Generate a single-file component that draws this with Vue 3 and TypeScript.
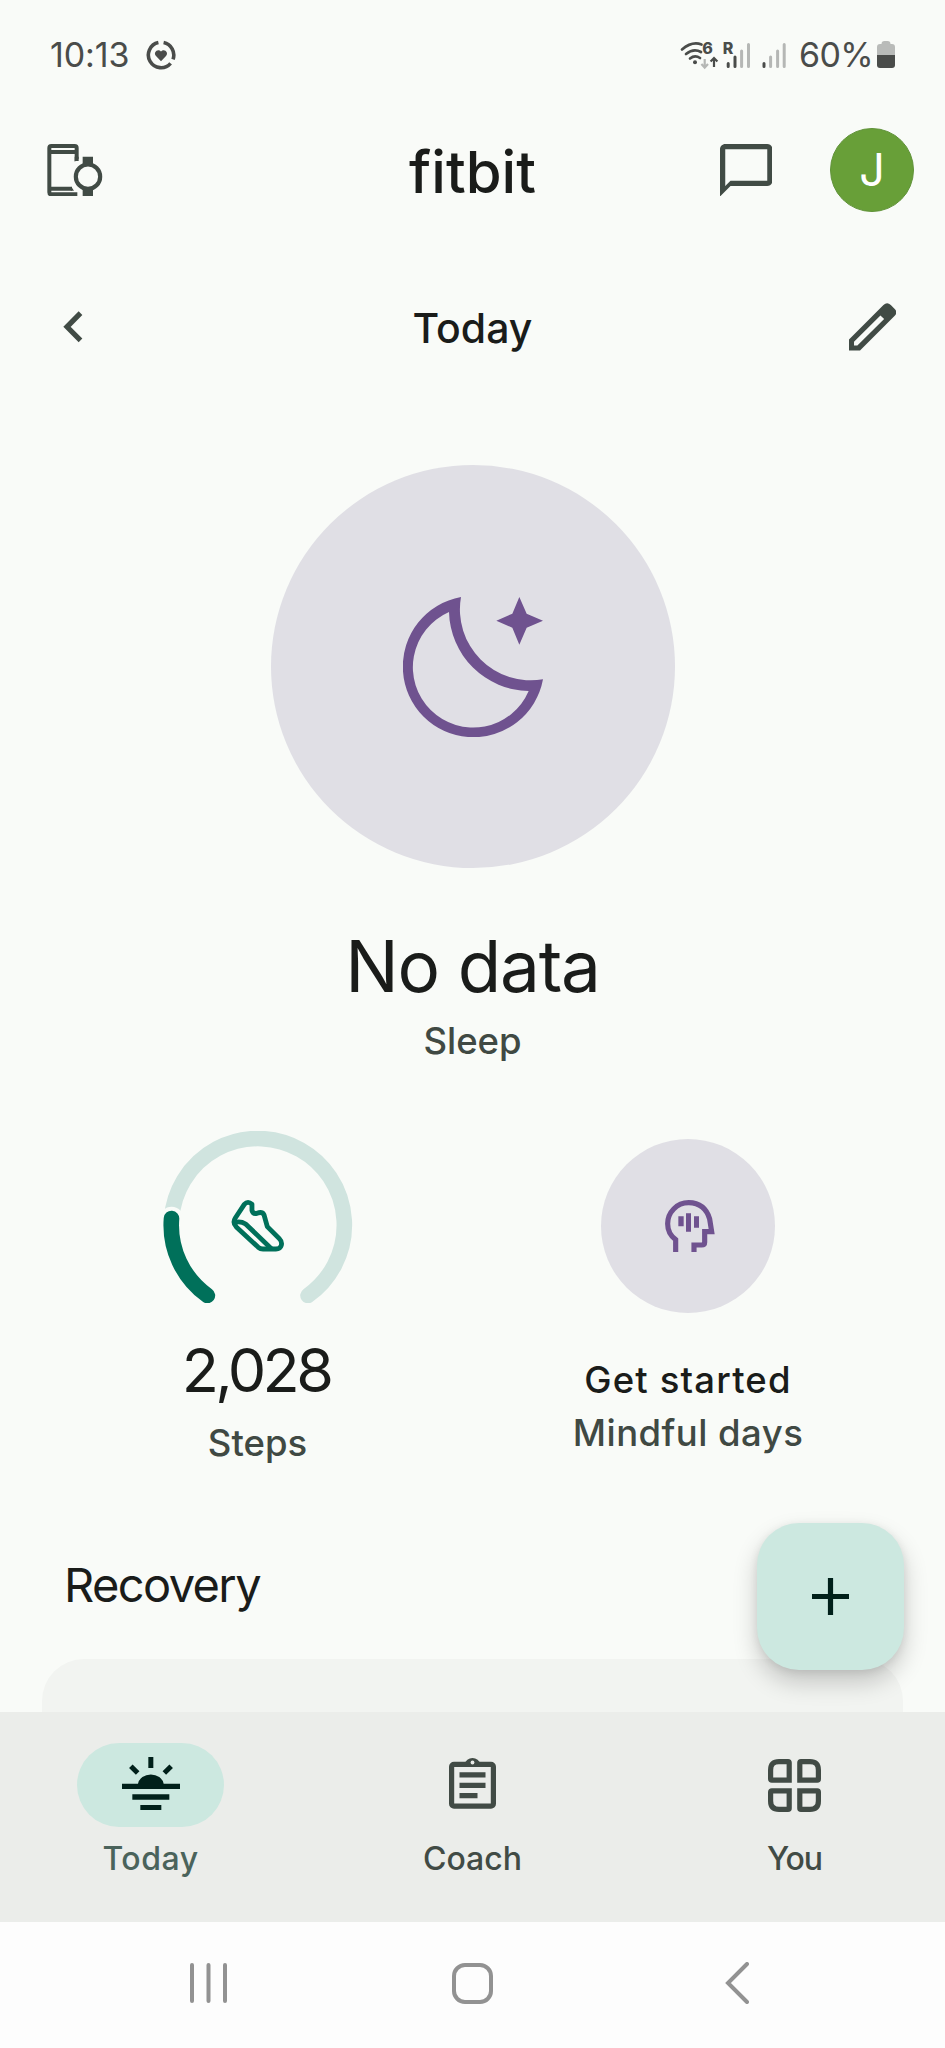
<script setup lang="ts">
interface Tab {
  id: 'today' | 'coach' | 'you'
  label: string
}

const tabs: Tab[] = [
  { id: 'today', label: 'Today' },
  { id: 'coach', label: 'Coach' },
  { id: 'you', label: 'You' },
]
const activeTab: Tab['id'] = 'today'
</script>

<template>
  <div class="screen">
    <main class="content">
      <div class="status">
        <div class="status-left">
          <span class="clock">10:13</span>
          <svg class="ring" viewBox="0 0 30 30">
            <g fill="none" stroke="#4a4c4a" stroke-width="3.6">
              <path d="M12.4 2.6A12.7 12.7 0 1 0 24.6 23.4" />
              <path d="M17.6 2.6A12.7 12.7 0 0 1 27 19.4" />
            </g>
            <path fill="#4a4c4a" d="M15 21.2l-5-5.1c-3.200-3.600 1.800-8.200 5-4.500 3.200-3.700 8.200.900 5 4.500z" />
          </svg>
        </div>
        <div class="status-right">
          <svg class="signals" viewBox="0 -8 108 46">
            <g fill="none" stroke="#4a4c4a" stroke-width="2.700" stroke-linecap="round">
              <path d="M2 9.500Q12 1 21.500 4.500" />
              <path d="M6 14Q13.500 8 21 12" />
              <path d="M10 18.500Q15 14.500 20 18" />
            </g>
            <circle cx="15" cy="22.300" r="2" fill="#4a4c4a" />
            <text x="22.300" y="13.800" class="tiny">6</text>
            <path fill="none" stroke="#b5b7b5" stroke-width="2.200" d="M24.700 19v8M21.400 24l3.300 3.600 3.300-3.600" />
            <path fill="none" stroke="#4a4c4a" stroke-width="2.200" d="M34 27v-8M30.600 21.600l3.400-3.600 3.400 3.600" />
            <text x="42.800" y="13.800" class="tiny">R</text>
            <g stroke-width="3" stroke-linecap="round">
              <path stroke="#4a4c4a" d="M48.200 23.500v3M55 17v9.500M84 23.500v3" />
              <path stroke="#b5b7b5" d="M61.600 11v15.500M68.500 4.500v22M90.600 17v9.500M97.600 11v15.500M104.200 4.500v22" />
            </g>
          </svg>
          <span class="percent">60%</span>
          <svg class="battery" viewBox="0 0 18 28">
            <path fill="#b9bbb9" d="M4.500 3q0-3 3-3h3q3 0 3 3h1.500q3 0 3 3v9H0V6q0-3 3-3z" />
            <path fill="#4a4c4a" d="M0 14h18v10q0 3-3 3H3q-3 0-3-3z" />
          </svg>
        </div>
      </div>

      <header class="appbar">
        <svg class="devices" viewBox="141 373 168 158">
          <g fill="none" stroke="#414b45" stroke-width="12">
            <path d="M230 424V385q0-6-6-6H154q-6 0-6 6V518q0 6 6 6H232" />
            <path d="M148 397H230M148 507H216" />
            <circle cx="264" cy="471" r="36.500" stroke-width="12.500" />
          </g>
          <path fill="#414b45" d="M248 411h31v25h-31zM248 506h31v25h-31zM224 411h12v6l-12 9zM214 501l8 12h-10z" />
        </svg>
        <h1 class="brand">fitbit</h1>
        <div class="appbar-end">
          <svg class="chat" viewBox="2 2 20 20">
            <path fill="#414b45" fill-rule="evenodd" d="M20 2H4c-1.100 0-2 .9-2 2v18l4-4h14c1.100 0 2-.9 2-2V4c0-1.100-.9-2-2-2zm0 14H6l-2 2V4h16z" />
          </svg>
          <div class="avatar">J</div>
        </div>
      </header>

      <div class="daybar">
        <svg class="prev" viewBox="0 0 20 32">
          <path fill="none" stroke="#414b45" stroke-width="5.200" d="M17.500 2.200L4 15.800l13.500 13.600" />
        </svg>
        <h2 class="day">Today</h2>
        <svg class="edit" viewBox="24 28 142 142">
          <path
            fill="#414b45"
            fill-rule="evenodd"
            d="M24 170V137L127 34Q138 23 149 34L160 45Q171 56 160 67L57 170ZM39 155H49L129 76L118 65L39 144Z"
          />
        </svg>
      </div>

      <section class="hero">
        <div class="hero-circle">
          <svg class="moon" viewBox="427 440 420 420">
            <path
              fill="#6f528f"
              fill-rule="evenodd"
              d="M601 440A212 212 0 1 0 847 687A213 213 0 0 1 601 440ZM565 485A181 181 0 1 0 804 722A243 243 0 0 1 565 485Z"
            />
            <path fill="#6f528f" d="M776 440l22 50 49 21-49 21-22 51-21-51-48-21 48-21z" />
          </svg>
        </div>
        <div class="hero-value">No data</div>
        <div class="hero-label">Sleep</div>
      </section>

      <section class="stats">
        <div class="stat">
          <svg class="gauge" viewBox="0 0 190 172">
            <g fill="none" stroke-linecap="round" stroke-width="15.600">
              <path stroke="#d0e4df" d="M8.600 87.500A86.500 86.500 0 1 1 145 164.500" />
              <path stroke="#f9fbf8" stroke-width="24" d="M8.600 87.700L8.500 99" />
              <path stroke="#00705a" d="M8.500 87.500A86.500 86.500 0 0 0 44.400 164.500" />
            </g>
            <g transform="translate(-22.700 -21.700) scale(.33333)" fill="none" stroke="#00705a" stroke-width="14.500" stroke-linejoin="round">
              <path d="M285 326L312 285Q323 273 335 285V303Q338 315 350 312Q365 306 371 316L381 352L417 388Q426 397 423 408Q420 419 407 419H368Q360 419 354 414L288 353Q276 340 285 326Z" />
              <path d="M281 340Q300 334 316 344L394 419" />
            </g>
          </svg>
          <div class="stat-number">2,028</div>
          <div class="stat-label steps">Steps</div>
        </div>
        <div class="stat">
          <div class="mind-circle">
            <svg class="head" viewBox="342 239 150 158">
              <path
                fill="none"
                stroke="#6f528f"
                stroke-width="15.500"
                d="M374 397V358Q350 340 350 311A63 63 0 0 1 413 247Q462 248 476 296L482 334H461V366Q461 374 452 374H429V397"
              />
              <path fill="#6f528f" d="M382 288h16v30h-16zM405 279h15v55h-15zM429 288h15v34h-15z" />
            </svg>
          </div>
          <div class="stat-title">Get started</div>
          <div class="stat-label mindful">Mindful days</div>
        </div>
      </section>

      <section class="recovery">
        <h3 class="recovery-title">Recovery</h3>
        <div class="card"></div>
      </section>

      <button class="fab" aria-label="Add">
        <svg viewBox="0 0 37 37"><path stroke="#00201a" stroke-width="5.200" d="M18.500 0v37M0 18.500h37" /></svg>
      </button>
    </main>

    <nav class="tabs">
      <div v-for="tab in tabs" :key="tab.id" class="tab" :class="[tab.id, { active: tab.id === activeTab }]">
        <div class="pill">
          <svg v-if="tab.id === 'today'" class="sun" viewBox="365 168 174 159">
            <path
              fill="#00201a"
              d="M365 248h48a39 33 0 0 1 77 0h49v16H365zM396 280h111v16H396zM420 312h63v15h-63zM444 168h15v33h-15z"
            />
            <path stroke="#00201a" stroke-width="15" d="M391.500 195.500l20.500 20.500M512.500 195.500L492 216" />
          </svg>
          <svg v-else-if="tab.id === 'coach'" class="clip" viewBox="0 0 47 53">
            <g fill="none" stroke="#414b45" stroke-width="5.200">
              <rect x="2.600" y="8.400" width="41.800" height="41.800" rx="2.400" />
              <path d="M10.500 18.800h26M10.500 29.300h26M10.500 39.700h18" />
            </g>
            <path fill="#414b45" d="M15.500 8.400a8.200 8.200 0 0 1 16 0z" />
            <circle cx="23.500" cy="6.500" r="1.900" fill="#ebedea" />
          </svg>
          <svg v-else class="grid" viewBox="0 0 53 53">
            <g fill="none" stroke="#414b45" stroke-width="5.200">
              <path d="M11 2.600H20Q21.200 2.600 21.200 3.800V21.200H3.800Q2.600 21.200 2.600 20V11Q2.600 2.600 11 2.600Z" />
              <path d="M42 2.600H33Q31.800 2.600 31.800 3.800V21.200H49.200Q50.400 21.200 50.400 20V11Q50.400 2.600 42 2.600Z" />
              <path d="M11 50.400H20Q21.200 50.400 21.200 49.200V31.800H3.800Q2.600 31.800 2.600 33V42Q2.600 50.400 11 50.400Z" />
              <path d="M42 50.400H33Q31.800 50.400 31.800 49.200V31.800H49.200Q50.400 31.800 50.400 33V42Q50.400 50.400 42 50.400Z" />
            </g>
          </svg>
        </div>
        <span class="tab-label">{{ tab.label }}</span>
      </div>
    </nav>

    <div class="system">
      <svg class="recents" viewBox="0 0 37 40">
        <path stroke="#929292" stroke-width="4" stroke-linecap="round" d="M2 2v36M18.500 2v36M35 2v36" />
      </svg>
      <svg class="home" viewBox="0 0 41 41">
        <rect x="2" y="2" width="37" height="37" rx="11" fill="none" stroke="#929292" stroke-width="4" />
      </svg>
      <svg class="back" viewBox="0 0 24 42">
        <path fill="none" stroke="#929292" stroke-width="4" stroke-linecap="round" d="M22 2L3 21l19 19" />
      </svg>
    </div>
  </div>
</template>

<style>
html,
body {
  margin: 0;
  background: #f9fbf8;
}
</style>

<style scoped>
.screen {
  width: 945px;
  height: 2048px;
  display: flex;
  flex-direction: column;
  overflow: hidden;
  background: #f9fbf8;
  color: #1a1c1a;
  font-family: Inter, Roboto, sans-serif;
}
svg {
  display: block;
  flex: none;
}
h1,
h2,
h3 {
  margin: 0;
}
.content {
  position: relative;
  height: 1712px;
  flex: none;
  overflow: hidden;
}

.status {
  height: 110px;
  box-sizing: border-box;
  padding: 0 50px;
  display: flex;
  align-items: center;
  justify-content: space-between;
  color: #4a4c4a;
}
.status-left,
.status-right {
  display: flex;
  align-items: center;
}
.clock,
.percent {
  font-size: 34px;
  line-height: 40px;
  white-space: nowrap;
}
.clock {
  width: 96px;
  letter-spacing: -0.1px;
}
.percent {
  width: 78px;
  letter-spacing: -0.6px;
}
.ring {
  width: 30px;
  height: 30px;
}
.signals {
  width: 108px;
  height: 46px;
  margin-right: 11px;
}
.battery {
  width: 18px;
  height: 28px;
}
.tiny {
  font-size: 16px;
  font-weight: 800;
  fill: #4a4c4a;
}

.appbar {
  height: 120px;
  box-sizing: border-box;
  padding: 0 31px;
  display: grid;
  grid-template-columns: 1fr auto 1fr;
  align-items: center;
}
.devices {
  width: 56px;
  height: 52.7px;
  margin-left: 16px;
}
.brand {
  padding-top: 3px;
  font-size: 58px;
  line-height: 70px;
  font-weight: 500;
}
.appbar-end {
  display: flex;
  align-items: center;
  justify-content: flex-end;
  gap: 58px;
}
.chat {
  width: 52.5px;
  height: 52.5px;
}
.avatar {
  width: 84px;
  height: 84px;
  box-sizing: border-box;
  border: 1px solid #61933a;
  border-radius: 50%;
  background: #689f38;
  color: #fff;
  font-size: 45px;
  line-height: 82px;
  text-align: center;
}

.daybar {
  height: 194px;
  box-sizing: border-box;
  padding: 0 49px 0 63px;
  display: flex;
  align-items: center;
  justify-content: space-between;
}
.prev {
  width: 20px;
  height: 32px;
  margin-right: 13.5px;
}
.day {
  padding-top: 1px;
  font-size: 41px;
  line-height: 50px;
  font-weight: 500;
}
.edit {
  width: 47.5px;
  height: 47.5px;
}

.hero {
  height: 642px;
  box-sizing: border-box;
  padding-top: 41px;
  display: flex;
  flex-direction: column;
  align-items: center;
}
.hero-circle {
  width: 404px;
  height: 404px;
  border-radius: 50%;
  background: #e0dfe5;
  display: flex;
  align-items: center;
  justify-content: center;
}
.moon {
  width: 140px;
  height: 140px;
}
.hero-value {
  margin-top: 58px;
  font-size: 71px;
  line-height: 80px;
  letter-spacing: -1.2px;
}
.hero-label {
  margin-top: 10px;
  font-size: 36.5px;
  line-height: 50px;
  font-weight: 500;
  color: #404943;
}

.stats {
  height: 427px;
  box-sizing: border-box;
  padding: 65px 42px 0;
  display: grid;
  grid-template-columns: 431px 430px;
}
.stat {
  display: flex;
  flex-direction: column;
  align-items: center;
}
.gauge {
  width: 190px;
  height: 172px;
}
.stat-number {
  margin-top: 37px;
  margin-left: -3px;
  font-size: 61px;
  line-height: 60px;
  letter-spacing: -3.6px;
}
.stat-label {
  font-size: 36.5px;
  line-height: 50px;
  font-weight: 500;
  color: #404943;
}
.steps {
  margin-top: 18px;
}
.mind-circle {
  width: 174px;
  height: 174px;
  margin-top: 8px;
  border-radius: 50%;
  background: #e0dfe5;
  display: flex;
  align-items: center;
  justify-content: center;
}
.head {
  width: 50px;
  height: 52.7px;
  margin-left: 3px;
}
.stat-title {
  margin-top: 42px;
  font-size: 36.5px;
  line-height: 50px;
  font-weight: 500;
  letter-spacing: 1.15px;
}
.mindful {
  margin-top: 3px;
  letter-spacing: 0.45px;
}

.recovery {
  padding: 67px 42px 0;
}
.recovery-title {
  padding-left: 22px;
  font-size: 47px;
  line-height: 50px;
  font-weight: 400;
  letter-spacing: -1.6px;
}
.card {
  height: 120px;
  margin-top: 49px;
  border-radius: 42px;
  background: #f2f4f1;
}

.fab {
  position: absolute;
  top: 1523px;
  left: 756.5px;
  width: 147px;
  height: 147px;
  padding: 0;
  border: 0;
  border-radius: 42px;
  background: #cce8e0;
  box-shadow: 0 12px 24px rgba(0, 0, 0, 0.2), 0 2px 8px rgba(0, 0, 0, 0.08);
  display: flex;
  align-items: center;
  justify-content: center;
}
.fab svg {
  width: 37px;
  height: 37px;
}

.tabs {
  height: 209.5px;
  flex: none;
  box-sizing: border-box;
  padding: 31px 0 0 0;
  background: #ebedea;
  display: flex;
  justify-content: center;
  gap: 28px;
}
.tab {
  width: 294px;
  display: flex;
  flex-direction: column;
  align-items: center;
  color: #414b45;
}
.pill {
  width: 147px;
  height: 84px;
  border-radius: 42px;
  display: flex;
  align-items: center;
  justify-content: center;
}
.active .pill {
  background: #cce8e0;
}
.active {
  color: #4a635b;
}
.sun {
  width: 58px;
  height: 53px;
  margin-top: -4px;
}
.clip {
  width: 47px;
  height: 53px;
  margin-top: -5px;
}
.grid {
  width: 53px;
  height: 53px;
}
.tab-label {
  margin-top: 12px;
  font-size: 32px;
  line-height: 40px;
  font-weight: 500;
}
.today .tab-label {
  letter-spacing: 0.5px;
}
.you .tab-label {
  letter-spacing: -1px;
}

.system {
  flex: 1;
  box-sizing: border-box;
  padding: 0 196px 3px 190px;
  background: #fdfdfd;
  display: flex;
  align-items: center;
  justify-content: space-between;
}
.recents {
  width: 37px;
  height: 40px;
}
.home {
  width: 41px;
  height: 41px;
  margin-right: 7px;
}
.back {
  width: 24px;
  height: 42px;
}
</style>
